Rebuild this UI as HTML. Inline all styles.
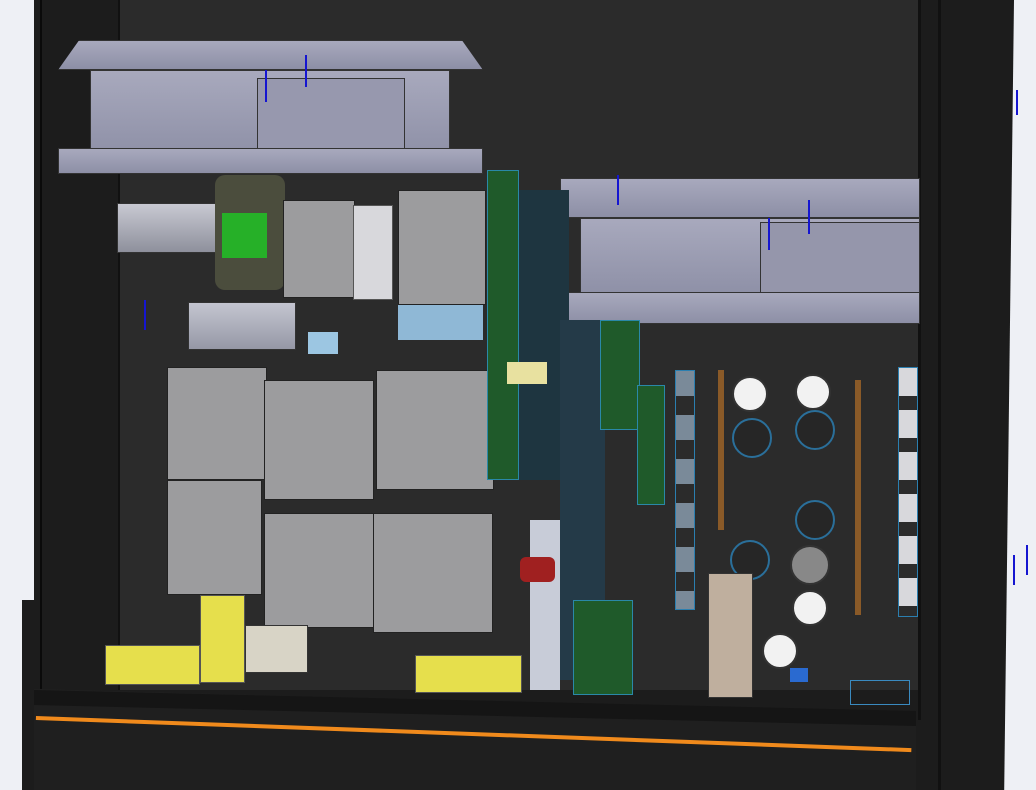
<!DOCTYPE html>
<html><head><style>
*{margin:0;padding:0;box-sizing:border-box}
body{width:1036px;height:790px;overflow:hidden;background:#eef0f5;position:relative;font-family:"Liberation Sans",sans-serif}
div{position:absolute}
.g{background:#9c9c9e;border:1px solid #222}
.fan{background:linear-gradient(#a8a9bd,#8d8fa6);border:1px solid #333}
.y{background:#e6df4c;border:1px solid #555}
.pcb{background:#1f5a2a;border:1px solid #2a88a8}
.ax{background:#1515d0}
.cap{border-radius:50%;background:#f2f2f2;border:2px solid #333}
.capd{border-radius:50%;background:#262626;border:2px solid #2a6f9a}
.sq{background:#dcdce0;border:1px solid #2b7fb0}
</style></head><body>
<!-- enclosure -->
<div style="left:34px;top:0;width:980px;height:790px;background:#1c1c1c;clip-path:polygon(0 0,100% 0,99% 100%,0 100%)"></div>
<div style="left:22px;top:600px;width:20px;height:190px;background:#1c1c1c"></div>
<div style="left:120px;top:0;width:800px;height:690px;background:#2b2b2b"></div>
<div style="left:40px;top:0;width:2px;height:790px;background:#0a0a0a"></div>
<div style="left:118px;top:0;width:2px;height:690px;background:#111"></div>
<div style="left:918px;top:0;width:3px;height:720px;background:#111"></div>
<div style="left:938px;top:0;width:3px;height:790px;background:#111"></div>
<!-- fan 1 -->
<div class="fan" style="left:58px;top:40px;width:425px;height:30px;clip-path:polygon(5% 0,95% 0,100% 100%,0 100%)"></div>
<div class="fan" style="left:90px;top:70px;width:360px;height:90px"></div>
<div style="left:257px;top:78px;width:148px;height:80px;border:1px solid #333;background:#9798ae"></div>
<div class="fan" style="left:58px;top:148px;width:425px;height:26px"></div>
<!-- fan 2 -->
<div class="fan" style="left:560px;top:178px;width:360px;height:40px"></div>
<div class="fan" style="left:580px;top:218px;width:340px;height:80px"></div>
<div style="left:760px;top:222px;width:160px;height:84px;border:1px solid #333;background:#9596ab"></div>
<div class="fan" style="left:560px;top:292px;width:360px;height:32px"></div>
<!-- toroid & left parts -->
<div style="left:117px;top:203px;width:103px;height:50px;background:linear-gradient(#c8c9d2,#8e909c);border:1px solid #333"></div>
<div style="left:215px;top:175px;width:70px;height:115px;background:#4b4d3d;border-radius:10px"></div>
<div style="left:222px;top:213px;width:45px;height:45px;background:#26b028"></div>
<div class="g" style="left:283px;top:200px;width:72px;height:98px"></div>
<div class="g" style="left:398px;top:190px;width:88px;height:115px"></div>
<div style="left:353px;top:205px;width:40px;height:95px;background:#d8d8dc;border:1px solid #555"></div>
<div style="left:188px;top:302px;width:108px;height:48px;background:linear-gradient(#c4c5d0,#9698a6);border:1px solid #333"></div>
<div style="left:398px;top:305px;width:85px;height:35px;background:#8fb8d6"></div>
<div style="left:308px;top:332px;width:30px;height:22px;background:#9cc6e2"></div>
<!-- transformers -->
<div class="g" style="left:167px;top:367px;width:100px;height:113px"></div>
<div class="g" style="left:167px;top:480px;width:95px;height:115px"></div>
<div class="g" style="left:264px;top:380px;width:110px;height:120px"></div>
<div class="g" style="left:376px;top:370px;width:118px;height:120px"></div>
<div class="g" style="left:264px;top:513px;width:110px;height:115px"></div>
<div class="g" style="left:373px;top:513px;width:120px;height:120px"></div>
<div style="left:245px;top:625px;width:63px;height:48px;background:#d8d4c6;border:1px solid #333"></div>
<div class="y" style="left:200px;top:595px;width:45px;height:88px"></div>
<div class="y" style="left:105px;top:645px;width:95px;height:40px"></div>
<div class="y" style="left:415px;top:655px;width:107px;height:38px"></div>
<!-- vertical pcb -->
<div class="pcb" style="left:487px;top:170px;width:32px;height:310px"></div>
<div style="left:519px;top:190px;width:50px;height:290px;background:#1e3540"></div>
<div style="left:507px;top:362px;width:40px;height:22px;background:#e8e1a0"></div>
<div style="left:560px;top:320px;width:45px;height:360px;background:#243a48"></div>
<div class="pcb" style="left:600px;top:320px;width:40px;height:110px"></div>
<div class="pcb" style="left:637px;top:385px;width:28px;height:120px"></div>
<div class="pcb" style="left:573px;top:600px;width:60px;height:95px"></div>
<div style="left:530px;top:520px;width:30px;height:170px;background:#c8ccd8"></div>
<div style="left:520px;top:557px;width:35px;height:25px;background:#a02020;border-radius:6px"></div>
<!-- caps -->
<div class="cap" style="left:732px;top:376px;width:36px;height:36px"></div>
<div class="cap" style="left:795px;top:374px;width:36px;height:36px"></div>
<div class="capd" style="left:732px;top:418px;width:40px;height:40px"></div>
<div class="capd" style="left:795px;top:410px;width:40px;height:40px"></div>
<div class="capd" style="left:795px;top:500px;width:40px;height:40px"></div>
<div class="capd" style="left:730px;top:540px;width:40px;height:40px"></div>
<div class="cap" style="left:790px;top:545px;width:40px;height:40px;background:#888"></div>
<div class="cap" style="left:792px;top:590px;width:36px;height:36px"></div>
<div class="cap" style="left:762px;top:633px;width:36px;height:36px"></div>
<div style="left:708px;top:573px;width:45px;height:125px;background:#bfaf9e;border:1px solid #333"></div>
<div style="left:718px;top:370px;width:6px;height:160px;background:#8a5a28"></div>
<div style="left:855px;top:380px;width:6px;height:235px;background:#8a5a28"></div>
<div class="sq" style="left:898px;top:367px;width:20px;height:250px;background:repeating-linear-gradient(#d8d8dc 0 28px,#2b2b2b 28px 42px)"></div>
<div class="sq" style="left:675px;top:370px;width:20px;height:240px;background:repeating-linear-gradient(#7a8a99 0 25px,#2b2b2b 25px 44px)"></div>
<div style="left:850px;top:680px;width:60px;height:25px;border:1px solid #3a8ac0"></div>
<div style="left:790px;top:668px;width:18px;height:14px;background:#2a6ad0"></div>
<!-- bottom front -->
<div style="left:34px;top:680px;width:882px;height:110px;background:#1f1f1f;clip-path:polygon(0 8%,100% 30%,100% 100%,0 100%)"></div>
<div style="left:34px;top:690px;width:882px;height:60px;background:#151515;clip-path:polygon(0 0,100% 35%,100% 60%,0 25%)"></div>
<div style="left:36px;top:716px;width:876px;height:4px;background:#f08a1c;transform:rotate(2.1deg);transform-origin:0 0"></div>
<!-- axis marks -->
<div class="ax" style="left:305px;top:55px;width:2px;height:32px"></div>
<div class="ax" style="left:265px;top:70px;width:2px;height:32px"></div>
<div class="ax" style="left:808px;top:200px;width:2px;height:34px"></div>
<div class="ax" style="left:768px;top:218px;width:2px;height:32px"></div>
<div class="ax" style="left:1013px;top:555px;width:2px;height:30px"></div>
<div class="ax" style="left:1026px;top:545px;width:2px;height:30px"></div>
<div class="ax" style="left:1016px;top:90px;width:2px;height:25px"></div>
<div class="ax" style="left:144px;top:300px;width:2px;height:30px"></div>
<div class="ax" style="left:617px;top:175px;width:2px;height:30px"></div>
</body></html>
